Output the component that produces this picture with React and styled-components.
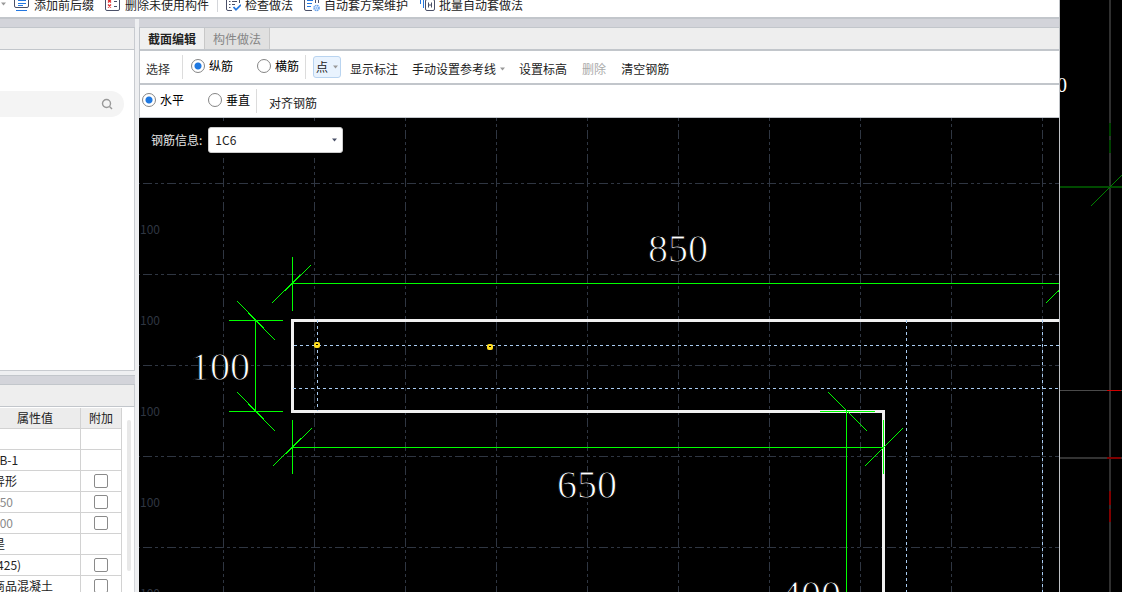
import React from "react"
import styled, { createGlobalStyle, css } from "styled-components"

const GlobalStyle = createGlobalStyle`
  * {
    box-sizing: border-box;
  }
  body {
    margin: 0;
    background: #000;
  }
  body, button, input, select, table {
    font-family: "Noto Sans CJK SC", "Liberation Sans", sans-serif;
    font-size: 12px;
    line-height: 16px;
    color: #222;
  }
`

const Shell = styled.div`
  display: grid;
  grid-template-columns: minmax(0, 1fr) 62px;
  height: 100vh;
  overflow: hidden;
`

const Window = styled.div`
  display: flex;
  flex-direction: column;
  min-width: 0;
  min-height: 0;
  background: #fff;
  border-right: 1px solid #bfc2c6;
  overflow: hidden;
`

const Ribbon = styled.div`
  display: flex;
  flex: none;
  align-items: flex-end;
  gap: 11px;
  height: 19px;
  padding-bottom: 5px;
  border-bottom: 2px solid #c2c6cb;
  overflow: hidden;
`

const RibbonButton = styled.button`
  display: flex;
  flex: none;
  align-items: flex-end;
  gap: 4px;
  padding: 0;
  border: 0;
  background: none;
  line-height: 14px;
  white-space: nowrap;
`

const RibbonDivider = styled.div`
  flex: none;
  width: 1px;
  height: 16px;
  margin: 0 -4px 0 -3px;
  background: #d4d6da;
`

const CaretBox = styled.span`
  display: flex;
  align-items: center;
  height: 16px;
  margin-right: -3px;
  padding-left: 1px;
`

const Body = styled.div`
  display: grid;
  grid-template-columns: 135px minmax(0, 1fr);
  column-gap: 4px;
  flex: 1;
  min-height: 0;
  background: #eeeff1;
`

const Sidebar = styled.aside`
  display: flex;
  flex-direction: column;
  min-height: 0;
  overflow: hidden;
`

const Band = styled.div`
  flex: none;
  height: ${p => (p.$framed ? 10 : 9)}px;
  background: #d3d4da;
  border-top: ${p => (p.$framed ? "1px solid #c2c6cb" : "0")};
  border-bottom: 1px solid #c2c6cb;
`

const PanelHeader = styled.div`
  flex: none;
  height: 22px;
  background: #eee;
  border-right: 1px solid #c8cbd0;
  border-bottom: 1px solid #c2c6cb;
`

const TreePanel = styled.section`
  flex: none;
  min-height: 321px;
  margin-bottom: 4px;
  padding: 41px 10px 0 0;
  background: #fff;
  border-right: 1px solid #c8cbd0;
  border-bottom: 1px solid #c8cbd0;
`

const SearchBox = styled.label`
  display: flex;
  align-items: center;
  height: 26px;
  padding-right: 11px;
  background: #f4f4f4;
  border-radius: 0 13px 13px 0;
`

const SearchInput = styled.input`
  flex: 1;
  min-width: 0;
  border: 0;
  outline: 0;
  background: none;
`

const PropertyPanel = styled.section`
  display: flex;
  flex: 1;
  min-height: 0;
  padding-top: 1px;
  background: #fff;
  border-right: 1px solid #d4d6da;
  overflow: hidden;
`

const TableClip = styled.div`
  flex: none;
  width: 122px;
  overflow: hidden;
`

const PropertyTable = styled.table`
  width: 132px;
  margin-left: -10px;
  table-layout: fixed;
  border-collapse: separate;
  border-spacing: 0;
`

const cell = css`
  height: 21px;
  padding: 0 0 0 3px;
  border-right: 1px solid #d2d2d2;
  border-bottom: 1px solid #d2d2d2;
  white-space: nowrap;
  overflow: hidden;
`

const HeadCell = styled.th`
  ${cell}
  width: ${p => p.$width}px;
  padding: 0;
  background: #ececec;
  font-weight: 400;
  text-align: center;
`

const ValueCell = styled.td`
  ${cell}
  color: ${p => (p.$muted ? "#8a8a8a" : "#222")};
`

const CheckCell = styled.td`
  ${cell}
  padding: 0;
`

const CheckBox = styled.input`
  display: block;
  appearance: none;
  width: 14px;
  height: 14px;
  margin: 0 auto;
  background: #fff;
  border: 1px solid #8a8a8a;
  border-radius: 2px;
`

const ScrollThumb = styled.div`
  width: 4px;
  height: 151px;
  margin: 12px 0 0 5px;
  background: #e8e8e8;
  border-radius: 2px;
`

const Editor = styled.main`
  display: flex;
  flex-direction: column;
  min-width: 0;
  min-height: 0;
`

const TabBar = styled.div`
  display: flex;
  flex: none;
  height: 23px;
  background: #eee;
  border-left: 1px solid #c2c6cb;
  border-bottom: 2px solid #c2c6cb;
`

const Tab = styled.button`
  padding: 0 8px;
  border: 0;
  border-right: 1px solid #c8c8c8;
  background: ${p => (p.$active ? "#f0f0f0" : "#e0e0e0")};
  color: ${p => (p.$active ? "#222" : "#858585")};
  font-weight: ${p => (p.$active ? 700 : 400)};
`

const ToolRow = styled.div`
  display: flex;
  flex: none;
  align-items: center;
  height: ${p => (p.$last ? 33 : 34)}px;
  padding: 0 0 2px ${p => (p.$last ? 2 : 6)}px;
  background: #fff;
  border-left: 1px solid #c2c6cb;
  border-bottom: ${p => (p.$last ? 1 : 2)}px solid #c2c6cb;
  white-space: nowrap;
`

const ToolLabel = styled.span`
  padding-top: 5px;
  color: #333;
`

const Divider = styled.div`
  width: 1px;
  height: 24px;
  margin: 2px ${p => p.$after}px 0 ${p => p.$before || 0}px;
  background: #dcdcdc;
`

const RadioLabel = styled.label`
  display: flex;
  align-items: center;
  gap: 4px;
  margin-right: ${p => p.$after}px;
  color: #000;
`

const Radio = styled.input`
  appearance: none;
  width: 14px;
  height: 14px;
  margin: 0;
  background: #fff;
  border: 1px solid #858585;
  border-radius: 50%;
  &:checked {
    background: radial-gradient(circle, #1f78e0 0 3px, #fff 4px);
  }
`

const DropButton = styled.button`
  display: flex;
  align-items: center;
  gap: 5px;
  height: 22px;
  margin: 2px 2px 0 0;
  padding: 0 2px;
  background: #e9f3fe;
  border: 1px solid #b9d4f0;
  border-radius: 3px;
`

const ToolButton = styled.button`
  display: flex;
  align-items: center;
  gap: 4px;
  padding: 5px 7px 0;
  border: 0;
  background: none;
  color: #222;
  &:disabled {
    color: #aaa;
  }
`

const EditTools = styled.div`
  display: flex;
  gap: 1px;
  padding-left: 1px;
`

const Viewport = styled.div`
  display: grid;
  grid-template: minmax(0, 1fr) / minmax(0, 1fr);
  flex: 1;
  min-height: 0;
  background: #000;
  overflow: hidden;
`

const Drawing = styled.svg`
  grid-area: 1 / 1;
  display: block;
  width: 100%;
  height: 100%;
  shape-rendering: crispEdges;
`

const InfoBar = styled.div`
  grid-area: 1 / 1;
  display: flex;
  align-items: center;
  place-self: start;
  gap: 6px;
  height: 37px;
  margin-top: 3px;
  padding-left: 12px;
  background: #000;
`

const InfoLabel = styled.label`
  color: #e6e6e6;
`

const SelectBox = styled.div`
  display: grid;
  align-items: center;
  width: 135px;
`

const BarSelect = styled.select`
  grid-area: 1 / 1;
  appearance: none;
  height: 26px;
  padding: 0 6px;
  background: #fff;
  border: 1px solid #ccc;
  border-radius: 3px;
`

const SelectCaret = styled.span`
  grid-area: 1 / 1;
  display: flex;
  justify-self: end;
  padding-right: 6px;
  pointer-events: none;
`

const DimText = styled.text`
  fill: #fff;
  stroke: #000;
  stroke-width: 1px;
  font-family: "Liberation Serif", serif;
  font-size: 40px;
  text-anchor: middle;
`

const ElevationText = styled.text`
  fill: #fff;
  font-family: "Liberation Serif", serif;
  font-size: 20px;
  text-anchor: middle;
`

const AxisText = styled.text`
  fill: #2f3642;
  font-size: 12px;
`

const Backdrop = styled.div`
  background: #000;
  overflow: hidden;
`

const Caret = ({ color = "#999" }) => (
  <svg width="5" height="4" viewBox="0 0 5 4">
    <path d="M0 0.5h5L2.5 3.5z" fill={color} />
  </svg>
)

const INK = "#4a5068"
const BLUE = "#2377e0"

const MonitorIcon = () => (
  <svg width="16" height="16" fill="none" stroke={INK}>
    <rect x="0.5" y="0.5" width="14" height="11" rx="1.5" />
    <path d="M4 4.5h8M4 7.5h8M4 9.5h5M2 14.5h11" stroke={BLUE} />
  </svg>
)

const ListIcon = () => (
  <svg width="16" height="16" fill="none" stroke={INK}>
    <rect x="0.5" y="0.5" width="14" height="14" rx="1.5" />
    <path d="M9 5.5h3M9 10.5h3" />
    <path d="M3 3.5l3 3M6 3.5l-3 3M3 8.5l3 3M6 8.5l-3 3" stroke="#e03030" strokeWidth="1.3" />
  </svg>
)

const CheckListIcon = () => (
  <svg width="16" height="16" fill="none" stroke={INK}>
    <path d="M14.5 7V2A1.5 1.5 0 0 0 13 .5H3A1.5 1.5 0 0 0 1.5 2v11A1.5 1.5 0 0 0 3 14.5h4" />
    <path d="M4 5.5h1.5M7 5.5h5M4 8.5h1.5M7 8.5h3M4 11.5h1.5" />
    <path d="M8.5 11l2.5 2.8 5-5" stroke={BLUE} strokeWidth="1.8" />
  </svg>
)

const SchemeIcon = () => (
  <svg width="16" height="16" fill="none" stroke={INK}>
    <path d="M14.5 7V2A1.5 1.5 0 0 0 13 .5H2A1.5 1.5 0 0 0 .5 2v11A1.5 1.5 0 0 0 2 14.5h6M11.5 3v4" />
    <path d="M3 4.5h6M3 7.5h5M3 10.5h4" stroke={BLUE} />
    <circle cx="12.5" cy="12" r="2.5" stroke="#6aa5ee" strokeWidth="1.6" strokeDasharray="1.5 .5" />
    <circle cx="12.5" cy="12" r="1.2" fill="#9cc4f5" stroke="none" />
  </svg>
)

const BatchIcon = () => (
  <svg width="16" height="16" fill="none" stroke={INK}>
    <path d="M1.5 1v7M4.5 1v11" stroke={BLUE} />
    <rect x="6.5" y="3.5" width="9" height="11" rx="1.5" />
    <path d="M9.500 6.500v5M12.500 6.500v5M9.500 9h3" />
  </svg>
)

const SearchIcon = () => (
  <svg width="12" height="12" fill="none" stroke="#999" strokeWidth="1.4">
    <circle cx="5.5" cy="5.5" r="4" />
    <path d="M8.5 8.5l2.5 2.5" />
  </svg>
)

const PROPERTIES = [
  { value: "" },
  { value: "JB-1" },
  { value: "异形", extra: true },
  { value: "850", extra: true, muted: true },
  { value: "500", extra: true, muted: true },
  { value: "是" },
  { value: "(425)", extra: true },
  { value: "商品混凝土", extra: true },
]

const GRID_STEP = 91
const GRID_X = Array.from({ length: 24 }, (_, i) => 84.5 + i * GRID_STEP)
const GRID_Y = Array.from({ length: 14 }, (_, i) => 65.5 + i * GRID_STEP)
const FAR = 4000

const REBARS = [[178, 227], [351, 229]]

const SectionDrawing = () => (
  <Drawing role="img" aria-label="截面">
    <g stroke="#2f3642" strokeDasharray="9 3 3 3 3 3">
      {GRID_X.map(x => (
        <path key={x} d={`M${x} 0V${FAR}`} strokeDashoffset="12" />
      ))}
      {GRID_Y.map(y => (
        <path key={y} d={`M0 ${y}H${FAR}`} strokeDashoffset="20" />
      ))}
    </g>
    {GRID_Y.map(y => (
      <AxisText key={y} x="1" y={y + 50}>100</AxisText>
    ))}

    <path
      d={`M${FAR} 202.5H153.5V293.5H744.5V${FAR}`}
      fill="none"
      stroke="#f0f0f0"
      strokeWidth="3"
    />

    <g stroke="#a9ccf2" strokeDasharray="3 3">
      <path d={`M155 227.5H${FAR}`} />
      <path d={`M154 270.5H${FAR}`} />
      <path d="M178.5 202V293" />
      <path d={`M767.5 202V${FAR}`} />
      <path d={`M903.5 202V${FAR}`} />
    </g>

    <g stroke="#0f0" fill="none">
      <path d={`M153 165.5H${FAR}M153.5 139V193M133 185L172 147M907 185L946 147`} />
      <path d="M116.5 202V294M90 202.5H144M90 293.5H144M98 183L136 222M98 274L136 313" />
      <path d="M153 329.5H745M153.5 302V356M134 348L173 310M744.5 302V356M726 348L764 310" />
      <path d={`M707.5 293V${FAR}M681 293.5H736M689 274L728 313`} />
    </g>

    {REBARS.map(([x, y]) => (
      <g key={x}>
        <rect x={x - 3} y={y - 3} width="6" height="6" rx="2" fill="#ffdd22" shapeRendering="auto" />
        <rect x={x - 1} y={y - 1} width="2" height="1" fill="#000" />
      </g>
    ))}

    <DimText x="539" y="144">850</DimText>
    <DimText x="448" y="380">650</DimText>
    <DimText x="81" y="262">100</DimText>
    <DimText x="672" y="490">400</DimText>
  </Drawing>
)

const BackdropDrawing = () => (
  <Drawing aria-hidden="true">
    <g strokeWidth="2">
      <path d={`M50 0V${FAR}`} stroke="#303030" />
      <path d="M0 187H62" stroke="#004a00" />
      <path d="M50 123V136M50 140V153" stroke="#004000" />
      <path d="M0 458H62" stroke="#333" />
      <path d="M47 458H61M50 491V505M50 509V522" stroke="#800000" />
    </g>
    <path d="M0 390.5H62" stroke="#4a4a4a" />
    <path d="M47 390.5H61" stroke="#d00000" />
    <path d="M31 206L62 175" stroke="#008000" />
    <ElevationText x="2" y="92">0</ElevationText>
  </Drawing>
)

export default function App() {
  return <>
    <GlobalStyle />
    <Shell>
      <Window>
        <Ribbon>
          <CaretBox><Caret /></CaretBox>
          <RibbonButton><MonitorIcon />添加前后缀</RibbonButton>
          <RibbonButton><ListIcon />删除未使用构件</RibbonButton>
          <RibbonDivider />
          <RibbonButton><CheckListIcon />检查做法</RibbonButton>
          <RibbonButton><SchemeIcon />自动套方案维护</RibbonButton>
          <RibbonButton><BatchIcon />批量自动套做法</RibbonButton>
        </Ribbon>
        <Body>
          <Sidebar>
            <Band />
            <PanelHeader />
            <TreePanel>
              <SearchBox>
                <SearchInput type="text" aria-label="搜索" />
                <SearchIcon />
              </SearchBox>
            </TreePanel>
            <Band $framed />
            <PanelHeader />
            <PropertyPanel>
              <TableClip>
                <PropertyTable>
                  <thead>
                    <tr>
                      <HeadCell $width={91}>属性值</HeadCell>
                      <HeadCell $width={41}>附加</HeadCell>
                    </tr>
                  </thead>
                  <tbody>
                    {PROPERTIES.map((row, i) => (
                      <tr key={i}>
                        <ValueCell $muted={row.muted}>{row.value}</ValueCell>
                        <CheckCell>
                          {row.extra && <CheckBox type="checkbox" aria-label={row.value} />}
                        </CheckCell>
                      </tr>
                    ))}
                  </tbody>
                </PropertyTable>
              </TableClip>
              <ScrollThumb />
            </PropertyPanel>
          </Sidebar>
          <Editor>
            <Band />
            <TabBar>
              <Tab $active>截面编辑</Tab>
              <Tab>构件做法</Tab>
            </TabBar>
            <ToolRow>
              <ToolLabel>选择</ToolLabel>
              <Divider $before={12} $after={8} />
              <RadioLabel $after={24}>
                <Radio type="radio" name="bar" defaultChecked />纵筋
              </RadioLabel>
              <RadioLabel $after={6}>
                <Radio type="radio" name="bar" />横筋
              </RadioLabel>
              <Divider $after={7} />
              <DropButton>点<Caret /></DropButton>
              <ToolButton>显示标注</ToolButton>
              <ToolButton>手动设置参考线<Caret /></ToolButton>
              <ToolButton>设置标高</ToolButton>
              <EditTools>
                <ToolButton disabled>删除</ToolButton>
                <ToolButton>清空钢筋</ToolButton>
              </EditTools>
            </ToolRow>
            <ToolRow $last>
              <RadioLabel $after={24}>
                <Radio type="radio" name="direction" defaultChecked />水平
              </RadioLabel>
              <RadioLabel $after={6}>
                <Radio type="radio" name="direction" />垂直
              </RadioLabel>
              <Divider $after={5} />
              <ToolButton>对齐钢筋</ToolButton>
            </ToolRow>
            <Viewport>
              <SectionDrawing />
              <InfoBar>
                <InfoLabel htmlFor="bar-info">钢筋信息:</InfoLabel>
                <SelectBox>
                  <BarSelect id="bar-info" defaultValue="1C6">
                    <option>1C6</option>
                  </BarSelect>
                  <SelectCaret><Caret color="#4a5068" /></SelectCaret>
                </SelectBox>
              </InfoBar>
            </Viewport>
          </Editor>
        </Body>
      </Window>
      <Backdrop>
        <BackdropDrawing />
      </Backdrop>
    </Shell>
  </>
}
